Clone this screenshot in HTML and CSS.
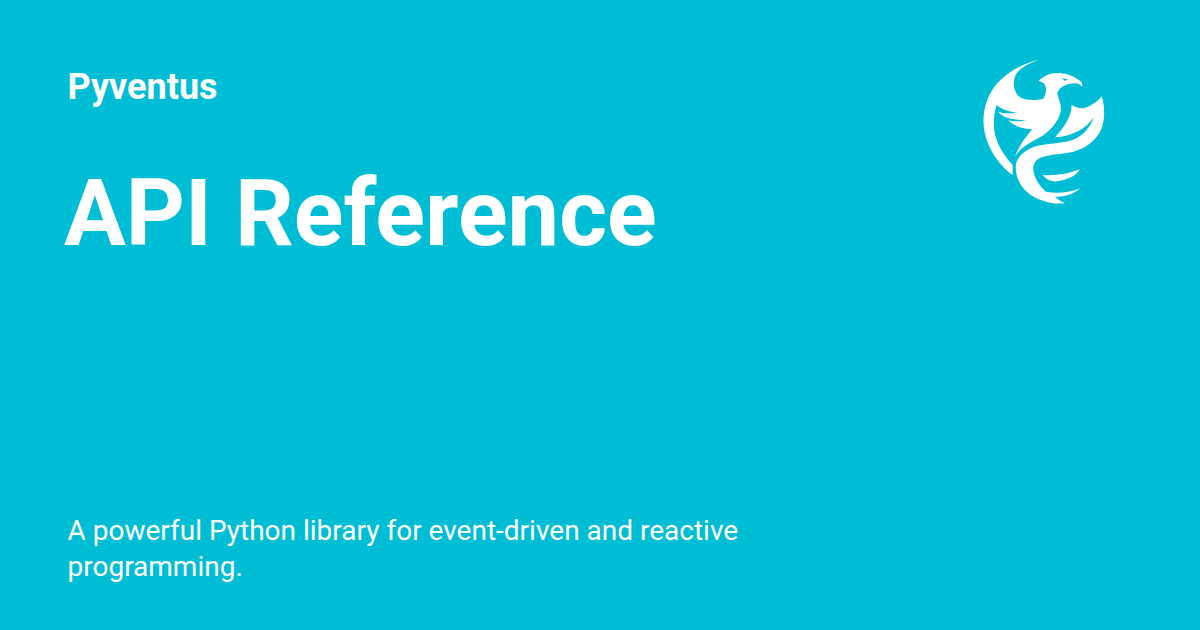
FILE: index.html
```html
<!DOCTYPE html>
<html lang="en">
<head>
<meta charset="utf-8">
<title>API Reference</title>
<link rel="stylesheet" href="styles.css">
</head>
<body>
<main class="card">
  <header class="top">
    <div class="brand">Pyventus</div>
    <svg class="logo" viewBox="0 0 450 495" width="150" height="165" aria-hidden="true">
      <path class="ink" d="M207 30C165 36 100 70 70 115C47 150 38 190 41 225C45 285 85 345 128 375L128 345C95 310 70 265 72 220C72 200 74 180 80 165C95 178 120 186 140 188C120 191 100 190 85 185C95 200 120 210 170 210C150 215 130 215 115 211C130 228 160 238 186 238C165 265 145 290 135 320C150 295 175 280 205 265C240 245 265 215 272 185C276 160 262 140 262 128C268 112 290 100 315 100C325 100 332 105 336 110C340 100 332 92 320 86C300 72 265 65 240 72C225 76 215 85 205 93C215 95 225 100 227 110C230 125 225 140 220 146C195 152 165 152 148 140C130 125 125 95 140 70C155 50 180 38 207 30Z"/>
      <path class="eye" d="M276 85L294 88L285 93Z"/>
      <path class="ink" d="M305 165C325 178 350 178 368 162C380 155 390 148 395 138C405 170 405 205 395 235C380 270 350 295 310 305C280 312 240 312 215 322C195 330 188 345 190 360C193 385 208 408 228 425C260 432 300 428 330 415C315 430 285 442 255 440C265 448 275 455 285 460C270 462 255 460 240 458C200 450 165 430 150 400C138 380 134 350 140 335C150 310 175 296 200 288C230 280 270 280 300 272C335 262 360 235 372 200C350 235 310 258 255 262C280 235 305 200 305 165Z"/>
      <path class="ink" d="M218 375C255 378 295 372 330 358C320 375 295 390 262 394C245 396 228 388 218 375Z"/>
    </svg>
  </header>
  <h1 class="title">API Reference</h1>
  <p class="desc">A powerful Python library for event-driven and reactive programming.</p>
</main>
</body>
</html>
```
FILE: styles.css
```css
html, body { margin: 0; padding: 0; }
body { width: 1200px; height: 630px; overflow: hidden; background: #00bdd6; font-family: Roboto, sans-serif; color: #fff; }
.card { box-sizing: border-box; width: 1200px; height: 630px; padding: 60px 80px 46px 68px; display: flex; flex-direction: column; }
.top { display: flex; justify-content: space-between; align-items: flex-start; height: 144px; margin-bottom: -45px; }
.brand { font-size: 36px; font-weight: 700; line-height: 56px; margin: -1px 0 0 -0.5px; }
.logo { display: block; margin-top: -10px; }
.ink { fill: #fff; }
.eye { fill: #00bdd6; }
.title { margin: 0 0 0 -4px; font-size: 92px; font-weight: 700; line-height: 110px; }
.desc { margin: auto 0 0 -0.5px; width: 720px; font-size: 28px; line-height: 35.5px; font-weight: 400; }
```
